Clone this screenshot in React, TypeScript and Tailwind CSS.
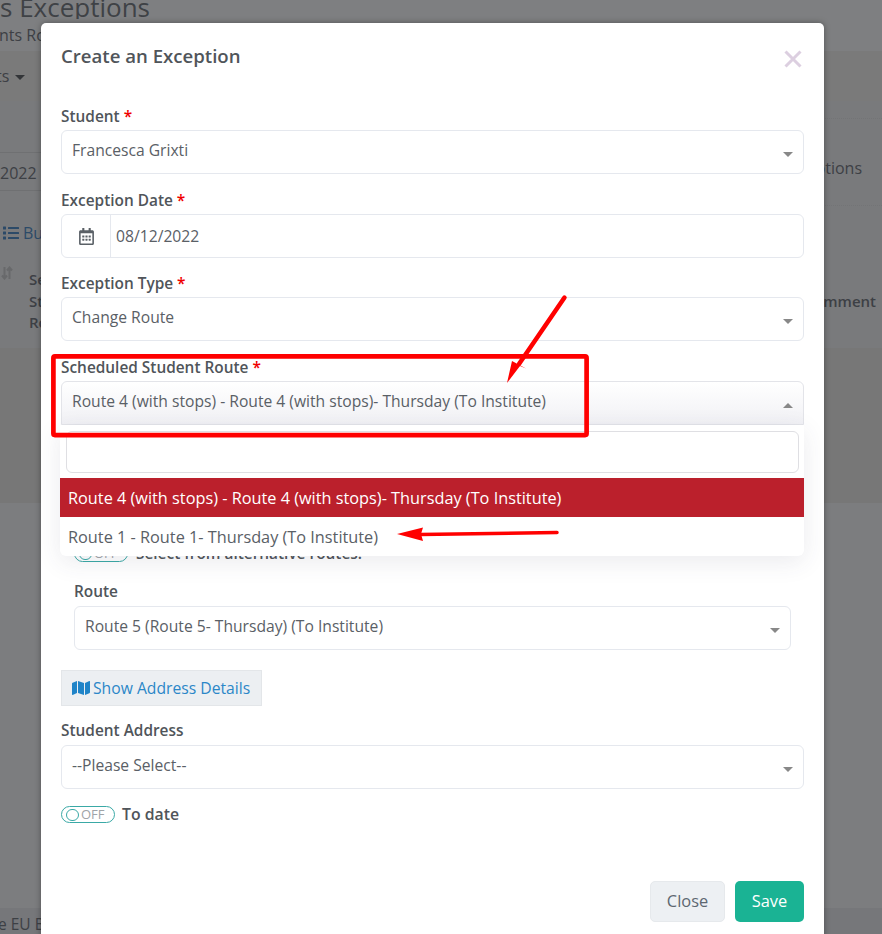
import React from "react";
import { FaList, FaMap, FaRegCalendarAlt } from "react-icons/fa";

const Caret = ({ up = false }: { up?: boolean }) => (
  <span
    className={
      up
        ? "w-0 h-0 border-x-[5px] border-x-transparent border-b-[5px] border-b-[#888888]"
        : "w-0 h-0 border-x-[5px] border-x-transparent border-t-[5px] border-t-[#888888]"
    }
  />
);

const Label = ({ text, required = false }: { text: string; required?: boolean }) => (
  <label className="block h-5 mb-1 text-[15.4px] leading-[22px] font-semibold text-[#50555a]">
    {text}
    {required && <span className="text-[#f00000]"> *</span>}
  </label>
);

const SelectBox = ({ value }: { value: string }) => (
  <div className="flex h-11 items-center justify-between px-[10px] bg-white border border-[#e5e8ee] rounded-[6px]">
    <span className="-mt-[3px] text-[15.65px] text-[#5a6066]">{value}</span>
    <span className="flex mt-[5px]">
      <Caret />
    </span>
  </div>
);

const Toggle = () => (
  <span className="flex items-center w-[54px] h-[17px] pl-[4px] gap-[2px] rounded-full border border-[#3aa9a6] bg-white">
    <span className="w-[13px] h-[12px] rounded-full border border-[#3aa9a6]" />
    <span className="text-[13px] leading-none font-normal text-[#a0a4a8]">OFF</span>
  </span>
);

// the page behind the modal, only the edges show
const BackPage = () => (
  <div className="flex flex-col h-[934px] text-[#3d4045]">
    <div className="h-[51px] shrink-0 bg-[#7e7f81]">
      <div className="h-[19px] overflow-hidden text-[26px] leading-[14px] text-[#3f4246]">s Exceptions</div>
      <div className="mt-[6px] -ml-[1px] text-[16px] leading-5">nts Ro</div>
    </div>
    <div className="flex h-[50px] shrink-0 items-center gap-[6px] -ml-[4px] bg-[#7a7a7a] text-[16px]">
      <span>ts</span>
      <span className="w-0 h-0 mt-[2px] border-x-[5px] border-x-transparent border-t-[5px] border-t-[#333538]" />
    </div>
    <div className="flex h-[247px] shrink-0 justify-between bg-[#797a7c]">
      <div className="flex w-[200px] flex-col">
        <div className="h-[52px] border-b border-[#6f7072]" />
        <div className="flex h-[38px] items-center pt-[2px] text-[16px] border-b border-[#6f7072]">2022</div>
        <div className="flex items-center gap-1 mt-[32px] ml-[3px] text-[16px] leading-5 text-[#2c4a68]">
          <FaList className="text-[16px]" />
          <span>Bulk</span>
        </div>
        <div className="flex gap-[16px] mt-[23px] text-[15px] font-semibold leading-[21.5px]">
          <svg width="12" height="14" viewBox="0 0 12 14" className="ml-[1px]" fill="none" stroke="#68696b" strokeWidth="2">
            <path d="M3.5 1V12M1 9.5L3.5 12.5L6 9.5M8.5 13V2M6 4.5L8.5 1.5L11 4.5" />
          </svg>
          <span className="mt-[3px]">
            Se
            <br />
            St
            <br />
            Ro
          </span>
        </div>
      </div>
      <div className="flex w-[200px] flex-col items-end">
        <div className="w-full h-[18px] border-b border-dotted border-[#737476]" />
        <div className="flex w-full h-[87px] justify-end pt-[39px] pr-[20px] text-[16px] leading-5 whitespace-nowrap border-b border-dotted border-[#737476]">
          Bus Route Exceptions
        </div>
        <span className="mt-[85px] mr-[6px] text-[15px] leading-5 font-semibold">Comment</span>
      </div>
    </div>
    <div className="h-[155px] shrink-0 bg-[#777777]" />
    <div className="h-[405px] shrink-0 bg-[#7c7d7f]" />
    <div className="h-[26px] shrink-0 pt-[7px] -ml-[2px] bg-[#76777a] text-[15.5px] leading-[18px]">e EU Bus</div>
  </div>
);

export default function App() {
  return (
    <div
      className="relative w-[882px] h-[934px] overflow-hidden bg-[#7c7d7f]"
      style={{ fontFamily: '"Open Sans", sans-serif' }}
    >
      <BackPage />

      {/* Modal */}
      <div className="absolute left-[41px] top-[23px] w-[783px] h-[950px] px-5 bg-white rounded-t-[5px] shadow-[0_0_6px_rgba(0,0,0,0.35)]">
        <div className="flex items-start justify-between h-[83px]">
          <h4 className="mt-[20px] text-[18.6px] leading-[26px] font-semibold text-[#50555a]">Create an Exception</h4>
          <svg width="18" height="18" viewBox="0 0 18 18" className="mt-[27px] mr-[2px]" fill="none" stroke="#dccfe0" strokeWidth="3">
            <path d="M1.5 1.5L16.5 16.5M16.5 1.5L1.5 16.5" />
          </svg>
        </div>

        <div className="mb-4">
          <Label text="Student" required />
          <SelectBox value="Francesca Grixti" />
        </div>

        <div className="mb-[15px]">
          <Label text="Exception Date" required />
          <div className="flex h-11 bg-white border border-[#e5e8ee] rounded-[6px]">
            <div className="flex w-[49px] items-center justify-center border-r border-[#e5e8ee]">
              <FaRegCalendarAlt className="text-[17px] text-[#5a6066]" />
            </div>
            <span className="self-center ml-[5px] pt-[2px] text-[15.7px] text-[#5a6066]">08/12/2022</span>
          </div>
        </div>

        <div className="mb-4">
          <Label text="Exception Type" required />
          <SelectBox value="Change Route" />
        </div>

        {/* Open select with its menu */}
        <div className="relative">
          <Label text="Scheduled Student Route" required />
          <div className="flex h-11 items-center justify-between px-[10px] border border-[#e3e4e9] rounded-t-[6px] bg-gradient-to-b from-white to-[#f1f1f5]">
            <span className="-mt-[3px] text-[15.65px] text-[#5a6066]">
              Route 4 (with stops) - Route 4 (with stops)- Thursday (To Institute)
            </span>
            <span className="flex mt-[5px]">
              <Caret up />
            </span>
          </div>
          <div className="absolute left-[-1px] right-0 top-[68px] z-10 h-[131px] bg-white rounded-b-[6px] shadow-[0_6px_24px_rgba(60,60,90,0.1)]">
            <div className="h-[42px] ml-[6px] mr-[5px] mt-[6px] mb-[5px] bg-white border border-[#dfdfe3] rounded-[6px]" />
            <div className="flex h-[39px] items-center pl-2 pt-[2px] bg-[#bb202c] text-[16.3px] text-white">
              Route 4 (with stops) - Route 4 (with stops)- Thursday (To Institute)
            </div>
            <div className="flex h-[39px] items-center pl-2 pt-[2px] text-[16.3px] text-[#5a6066]">
              Route 1 - Route 1- Thursday (To Institute)
            </div>
          </div>
        </div>

        <div className="px-[13px]">
          <div className="flex items-center gap-2 h-[17px] mt-[120px] text-[15.4px] font-semibold text-[#50555a]">
            <Toggle />
            <span>Select from alternative routes:</span>
          </div>
          <div className="mt-[19px]">
            <Label text="Route" />
            <div className="pt-px">
              <SelectBox value="Route 5 (Route 5- Thursday) (To Institute)" />
            </div>
          </div>
        </div>

        <div className="flex items-center w-[201px] h-9 mt-5 pl-[10px] gap-[3px] bg-[#eceff2] border border-[#e3e6e9] text-[15.7px] text-[#2b87c8]">
          <FaMap className="text-[18px] text-[#1f84c8]" />
          <span className="pt-[2px]">Show Address Details</span>
        </div>

        <div className="mt-[14px]">
          <Label text="Student Address" />
          <div className="pt-px">
            <SelectBox value="--Please Select--" />
          </div>
        </div>

        <div className="flex items-center gap-[7px] h-[17px] mt-[17px] text-[15.8px] font-semibold text-[#50555a]">
          <Toggle />
          <span>To date</span>
        </div>

        <div className="flex justify-end gap-[10px] mt-[58px]">
          <button className="w-[75px] h-[41px] rounded-[5px] bg-[#edf0f3] border border-[#e6e9ec] text-[16.4px] text-[#5d6771]">
            Close
          </button>
          <button className="w-[69px] h-[41px] rounded-[5px] bg-[#1ab394] text-[16.4px] text-white">Save</button>
        </div>
      </div>

      {/* Red annotations drawn over the screenshot */}
      <svg className="absolute inset-0 z-20 pointer-events-none" width="882" height="934" viewBox="0 0 882 934" fill="none">
        <rect x="53.4" y="356.4" width="533.2" height="78.7" rx="1.5" stroke="#ff0000" strokeWidth="4.7" />
        <path d="M564.5 297.5L519 364" stroke="#ff0000" strokeWidth="4.5" strokeLinecap="round" />
        <path d="M507 383L512 361L526 368.5L520 366Z" fill="#ff0000" />
        <path d="M557 532.5L420 534.5" stroke="#ff0000" strokeWidth="3.5" strokeLinecap="round" />
        <path d="M397 534L423 527.5L421 534L423 541Z" fill="#ff0000" />
      </svg>
    </div>
  );
}
